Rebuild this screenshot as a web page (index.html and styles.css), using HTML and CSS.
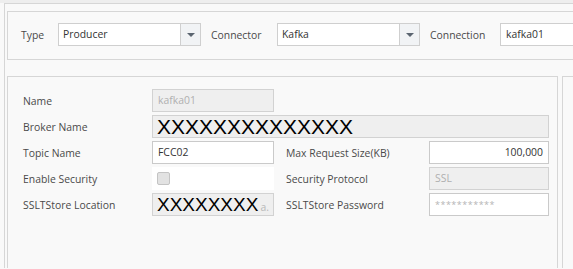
FILE: index.html
```html
<!DOCTYPE html>
<html lang="en">
<head>
    <meta charset="UTF-8">
    <meta name="viewport" content="width=device-width, initial-scale=1.0">
    <title>Connector Settings</title>
    <link rel="stylesheet" href="styles.css">
</head>
<body>
    <div class="top-strip"></div>
    <div class="frame">
        <div class="filter-bar">
            <span class="filter-label type-label">Type</span>
            <div class="select">
                <span class="select-value">Producer</span>
                <span class="select-button"><span class="arrow"></span></span>
            </div>
            <span class="filter-label connector-label">Connector</span>
            <div class="select">
                <span class="select-value">Kafka</span>
                <span class="select-button"><span class="arrow"></span></span>
            </div>
            <span class="filter-label connection-label">Connection</span>
            <div class="text-box connection-box">kafka01</div>
        </div>

        <div class="panels">
            <div class="form-panel">
                <div class="form-grid">
                    <label class="field-label">Name</label>
                    <div class="field disabled">kafka01</div>
                    <div></div><div></div><div></div>

                    <label class="field-label">Broker Name</label>
                    <div class="field disabled wide masked broker"><span class="mask">XXXXXXXXXXXXXX</span></div>

                    <label class="field-label">Topic Name</label>
                    <div class="field">FCC02</div>
                    <div></div>
                    <label class="field-label">Max Request Size(KB)</label>
                    <div class="field number">100,000</div>

                    <label class="field-label">Enable Security</label>
                    <div class="check-cell"><span class="checkbox"></span></div>
                    <div></div>
                    <label class="field-label">Security Protocol</label>
                    <div class="field disabled">SSL</div>

                    <label class="field-label">SSLTStore Location</label>
                    <div class="field disabled masked store"><span class="mask">XXXXXXXX</span><span class="faded">a.</span></div>
                    <div></div>
                    <label class="field-label">SSLTStore Password</label>
                    <div class="field password">***********</div>
                </div>
            </div>
            <div class="side-panel"></div>
        </div>
    </div>
</body>
</html>
```

FILE: styles.css
```css
body {
    margin: 0;
    background-color: #f9f9f9;
    font-family: "Open Sans", "Noto Sans", sans-serif;
    font-size: 10.4px;
    color: #333;
    overflow: hidden;
    height: 269px;
}
.top-strip {
    height: 3px;
    background: #eeeeee;
}
.frame {
    margin-left: 4px;
    border-top: 1px solid #d6d6d6;
    border-left: 1px solid #d6d6d6;
    padding: 7px 0 0 2px;
    height: 265px;
    box-sizing: border-box;
    overflow: hidden;
}
.filter-bar {
    display: flex;
    align-items: center;
    width: 620px;
    height: 49px;
    box-sizing: border-box;
    border: 1px solid #d6d6d6;
    padding: 0 0 2px 13px;
}
.filter-label {
    color: #4a4a4a;
}
.type-label {
    width: 37px;
}
.connector-label {
    margin-left: 10px;
    width: 66px;
}
.connection-label {
    margin-left: 10px;
    width: 70px;
}
.select {
    display: flex;
    width: 143px;
    height: 23px;
    box-sizing: border-box;
    border: 1px solid #cfcfcf;
    background: #fff;
}
.select-value {
    flex: 1;
    padding-left: 4px;
    line-height: 21px;
}
.select-button {
    width: 19px;
    border-left: 1px solid #cfcfcf;
    background: #f1f3f5;
    display: flex;
    align-items: center;
    justify-content: center;
}
.arrow {
    width: 0;
    height: 0;
    border-left: 4px solid transparent;
    border-right: 4px solid transparent;
    border-top: 4px solid #5b6570;
}
.text-box {
    height: 23px;
    box-sizing: border-box;
    border: 1px solid #cfcfcf;
    background: #fff;
    padding-left: 5px;
    line-height: 21px;
}
.connection-box {
    width: 120px;
}
.panels {
    display: flex;
    gap: 4px;
    margin-top: 16px;
}
.form-panel {
    flex-shrink: 0;
    width: 551px;
    height: 200px;
    box-sizing: border-box;
    border: 1px solid #d6d6d6;
    padding: 12px 0 0 15px;
}
.side-panel {
    flex-shrink: 0;
    width: 40px;
    height: 200px;
    border: 1px solid #d6d6d6;
}
.form-grid {
    display: grid;
    grid-template-columns: 129px 122px 12px 143px 120px;
    grid-auto-rows: 23px;
    row-gap: 3px;
    align-items: center;
}
.field-label {
    color: #4a4a4a;
}
.field {
    height: 23px;
    box-sizing: border-box;
    border: 1px solid #cacaca;
    background: #fff;
    padding: 0 5px;
    line-height: 21px;
    overflow: hidden;
    white-space: nowrap;
}
.field.disabled {
    background: #efefef;
    border-color: #d2d2d2;
    color: #b0b0b0;
}
.field.wide {
    grid-column: 2 / 6;
}
.field.number {
    text-align: right;
}
.field.password {
    color: #b5b5b5;
    font-size: 9px;
    letter-spacing: 0.5px;
}
.field.masked {
    padding-left: 4px;
    font-family: "Liberation Sans", Arial, sans-serif;
}
.field.masked .mask {
    color: #000;
}
.broker .mask {
    font-size: 21px;
    line-height: 21px;
}
.store .mask {
    font-size: 19px;
    line-height: 21px;
}
.faded {
    font-family: "Open Sans", sans-serif;
    font-size: 10.4px;
    color: #b8b8b8;
    margin-left: 2px;
}
.check-cell {
    height: 23px;
    background: #fff;
    display: flex;
    align-items: center;
    padding-left: 5px;
}
.checkbox {
    width: 11px;
    height: 11px;
    border: 1px solid #c4c4c4;
    border-radius: 2px;
    background: #e2e2e2;
}
```
